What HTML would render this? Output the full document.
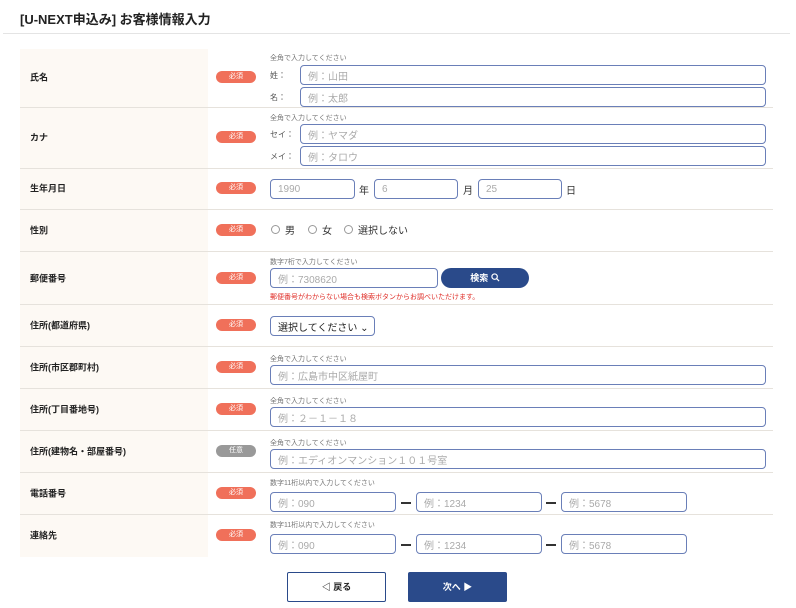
<!DOCTYPE html>
<html><head><meta charset="utf-8"><style>
*{box-sizing:border-box;margin:0;padding:0}
body{width:796px;height:608px;background:#fff;font-family:"Liberation Sans","Noto Sans CJK JP",sans-serif;position:relative;overflow:hidden;color:#222}
.a{position:absolute}
h1{position:absolute;left:20px;top:9px;font-size:13px;font-weight:bold;color:#222}
.hr{position:absolute;left:3px;top:33px;width:787px;height:1px;background:#e4e4e4}
.lab{position:absolute;left:20px;width:188px;background:#fdf9f4}
.lt{position:absolute;left:30px;font-size:9px;font-weight:bold;color:#222;transform:translateY(-50%)}
.sep{position:absolute;left:20px;width:753px;height:1px;background:#e6e2dc}
.b{position:absolute;left:216px;width:40px;height:12px;border-radius:6px;background:#f0705a;color:#fff;font-size:7px;text-align:center;line-height:12px;transform:translateY(-50%)}
.b.g{background:#999}
.h{position:absolute;font-size:7px;color:#777;left:270px}
.in{position:absolute;border:1.5px solid #6a7fb8;border-radius:4px;height:20px;font-size:10px;color:#aaa;padding-left:7px;display:flex;align-items:center;background:#fff}
.s{position:absolute;font-size:8px;color:#555}
.t{position:absolute;font-size:10px;color:#333}
.r{position:absolute;width:9px;height:9px;border:1px solid #999;border-radius:50%}
.d{position:absolute;width:10px;height:1.5px;background:#333}
</style></head><body>
<h1>[U-NEXT申込み] お客様情報入力</h1>
<div class="hr"></div>

<div class="lab" style="top:49px;height:508px"></div>
<div class="sep" style="top:107px"></div>
<div class="sep" style="top:168px"></div>
<div class="sep" style="top:209px"></div>
<div class="sep" style="top:251px"></div>
<div class="sep" style="top:304px"></div>
<div class="sep" style="top:346px"></div>
<div class="sep" style="top:388px"></div>
<div class="sep" style="top:430px"></div>
<div class="sep" style="top:472px"></div>
<div class="sep" style="top:514px"></div>

<div class="lt" style="top:77px">氏名</div><div class="b" style="top:77px">必須</div>
<div class="lt" style="top:137px">カナ</div><div class="b" style="top:137px">必須</div>
<div class="lt" style="top:188px">生年月日</div><div class="b" style="top:188px">必須</div>
<div class="lt" style="top:230px">性別</div><div class="b" style="top:230px">必須</div>
<div class="lt" style="top:278px">郵便番号</div><div class="b" style="top:278px">必須</div>
<div class="lt" style="top:325px">住所(都道府県)</div><div class="b" style="top:325px">必須</div>
<div class="lt" style="top:367px">住所(市区郡町村)</div><div class="b" style="top:367px">必須</div>
<div class="lt" style="top:409px">住所(丁目番地号)</div><div class="b" style="top:409px">必須</div>
<div class="lt" style="top:451px">住所(建物名・部屋番号)</div><div class="b g" style="top:451px">任意</div>
<div class="lt" style="top:493px">電話番号</div><div class="b" style="top:493px">必須</div>
<div class="lt" style="top:535px">連絡先</div><div class="b" style="top:535px">必須</div>

<div class="h" style="top:53px">全角で入力してください</div>
<div class="s" style="left:270px;top:70px">姓：</div>
<div class="in" style="left:300px;top:65px;width:466px">例：山田</div>
<div class="s" style="left:270px;top:92px">名：</div>
<div class="in" style="left:300px;top:87px;width:466px">例：太郎</div>

<div class="h" style="top:113px">全角で入力してください</div>
<div class="s" style="left:270px;top:129px">セイ：</div>
<div class="in" style="left:300px;top:124px;width:466px">例：ヤマダ</div>
<div class="s" style="left:270px;top:151px">メイ：</div>
<div class="in" style="left:300px;top:146px;width:466px">例：タロウ</div>

<div class="in" style="left:270px;top:179px;width:85px">1990</div>
<div class="t" style="left:359px;top:182px">年</div>
<div class="in" style="left:374px;top:179px;width:84px">6</div>
<div class="t" style="left:463px;top:182px">月</div>
<div class="in" style="left:478px;top:179px;width:84px">25</div>
<div class="t" style="left:566px;top:182px">日</div>

<div class="r" style="left:271px;top:225px"></div><div class="t" style="left:285px;top:222px">男</div>
<div class="r" style="left:308px;top:225px"></div><div class="t" style="left:322px;top:222px">女</div>
<div class="r" style="left:344px;top:225px"></div><div class="t" style="left:358px;top:222px">選択しない</div>

<div class="h" style="top:257px">数字7桁で入力してください</div>
<div class="in" style="left:270px;top:268px;width:168px">例：7308620</div>
<div class="a" style="left:441px;top:268px;width:88px;height:20px;border-radius:10px;background:#2a4a8a;color:#fff;font-size:9px;font-weight:bold;text-align:center;line-height:20px">検索 <svg width="9" height="9" viewBox="0 0 10 10" style="vertical-align:-1px"><circle cx="4" cy="4" r="3" fill="none" stroke="#fff" stroke-width="1.3"/><path d="M6.2 6.2L9 9" stroke="#fff" stroke-width="1.3"/></svg></div>
<div class="a" style="left:270px;top:292px;font-size:7px;color:#e0302a">郵便番号がわからない場合も検索ボタンからお調べいただけます。</div>

<div class="in" style="left:270px;top:316px;width:105px;color:#222;font-size:10px">選択してください ⌄</div>

<div class="h" style="top:354px">全角で入力してください</div>
<div class="in" style="left:270px;top:365px;width:496px">例：広島市中区紙屋町</div>
<div class="h" style="top:396px">全角で入力してください</div>
<div class="in" style="left:270px;top:407px;width:496px">例：２－１－１８</div>
<div class="h" style="top:438px">全角で入力してください</div>
<div class="in" style="left:270px;top:449px;width:496px">例：エディオンマンション１０１号室</div>

<div class="h" style="top:478px">数字11桁以内で入力してください</div>
<div class="in" style="left:270px;top:492px;width:126px">例：090</div>
<div class="d" style="left:401px;top:502px"></div>
<div class="in" style="left:416px;top:492px;width:126px">例：1234</div>
<div class="d" style="left:546px;top:502px"></div>
<div class="in" style="left:561px;top:492px;width:126px">例：5678</div>

<div class="h" style="top:520px">数字11桁以内で入力してください</div>
<div class="in" style="left:270px;top:534px;width:126px">例：090</div>
<div class="d" style="left:401px;top:544px"></div>
<div class="in" style="left:416px;top:534px;width:126px">例：1234</div>
<div class="d" style="left:546px;top:544px"></div>
<div class="in" style="left:561px;top:534px;width:126px">例：5678</div>

<div class="a" style="left:287px;top:572px;width:99px;height:30px;border:1px solid #2a4a8a;border-radius:2px;text-align:center;line-height:28px;font-size:9px;font-weight:bold;color:#222">◁ 戻る</div>
<div class="a" style="left:408px;top:572px;width:99px;height:30px;background:#2a4a8a;border-radius:2px;text-align:center;line-height:30px;font-size:9px;font-weight:bold;color:#fff">次へ ▶</div>
</body></html>
